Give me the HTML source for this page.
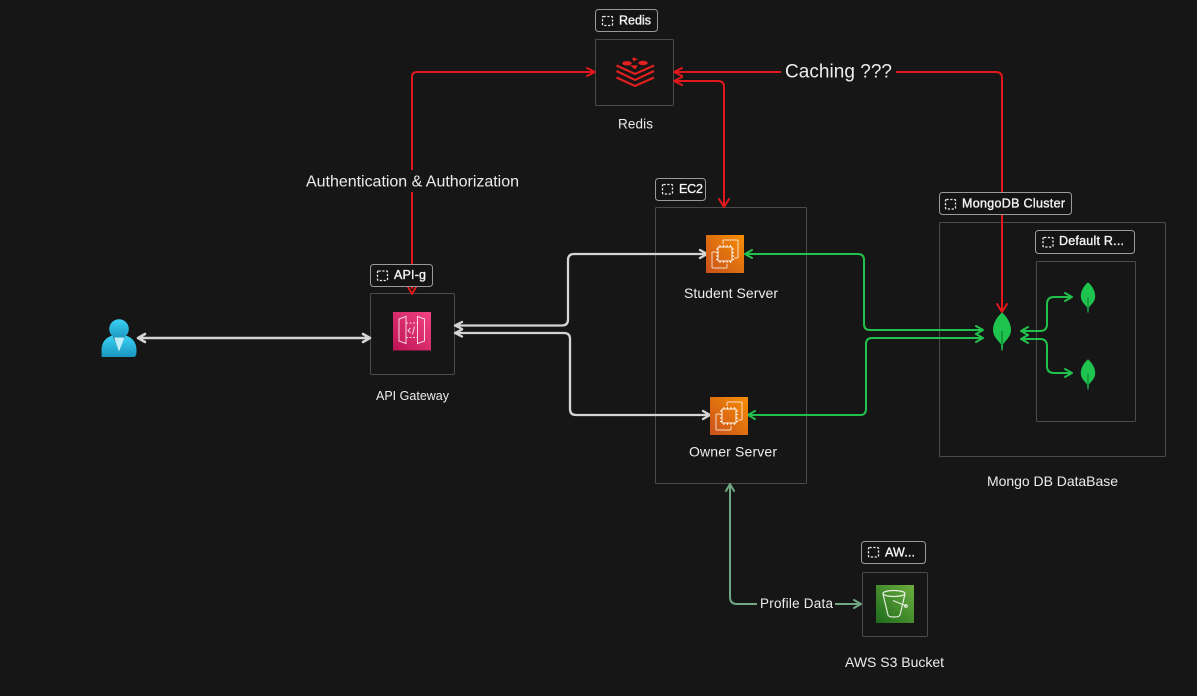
<!DOCTYPE html>
<html><head><meta charset="utf-8"><style>
html,body{margin:0;padding:0;background:#161616;width:1197px;height:696px;overflow:hidden}
svg{display:block;filter:blur(.3px)}
text{font-family:"Liberation Sans",sans-serif;fill:#ececec}
.box{fill:none;stroke:#4a4a4a;stroke-width:1}
.lab{fill:#141414;stroke:#9a9a9a;stroke-width:1}
.dash{fill:none;stroke:#eee;stroke-width:1.3;stroke-dasharray:2.2 1.6}
.lt{font-size:12.500px;font-weight:400;fill:#f4f4f4;stroke:#f4f4f4;stroke-width:.35}
.l{fill:none;stroke-width:2;stroke-linejoin:round;stroke-linecap:round}
.w{stroke:#d4d4d4}.r{stroke:#e0181c}.g{stroke:#22c04c}.p{stroke:#6fa883}
.ic{fill:none;stroke:#fff;stroke-width:1;opacity:.75}
</style></head><body>
<svg width="1197" height="696" viewBox="0 0 1197 696" xmlns="http://www.w3.org/2000/svg">
<defs>
<linearGradient id="pk" x1="1" y1="0" x2="0" y2="1"><stop offset="0" stop-color="#f34482"/><stop offset="1" stop-color="#bc1356"/></linearGradient>
<linearGradient id="or" x1="1" y1="0" x2="0" y2="1"><stop offset="0" stop-color="#f78e04"/><stop offset="1" stop-color="#c8511b"/></linearGradient>
<linearGradient id="gr" x1="1" y1="0" x2="0" y2="1"><stop offset="0" stop-color="#6cae3e"/><stop offset="1" stop-color="#1e6b1c"/></linearGradient>
<linearGradient id="us" x1="0" y1="0" x2="0" y2="1"><stop offset="0" stop-color="#3dd2f5"/><stop offset="1" stop-color="#1896c0"/></linearGradient>
<g id="ec2">
<path class="ic" d="M17 9V6a1 1 0 0 1 1-1H31a1 1 0 0 1 1 1V22a1 1 0 0 1-1 1H28"/>
<path class="ic" d="M21 29V32a1 1 0 0 1-1 1H7a1 1 0 0 1-1-1V18a1 1 0 0 1 1-1H10"/>
<rect class="ic" x="12" y="12" width="14" height="14" rx=".5" style="opacity:.95"/>
<path class="ic" d="M10 14h2M10 17.500h2M10 21h2M10 24.500h2M26 14h2M26 17.500h2M26 21h2M26 24.500h2M14 10v2M17.500 10v2M21 10v2M24.500 10v2M14 26v2M17.500 26v2M21 26v2M24.500 26v2" style="opacity:.95"/>
</g>
<path id="leaf" d="M0-18.500C5-14 9-8 9-1 9 6 3 10 1 13.500L.6 19.500H-.6L-1 13.500C-3 10-9 6-9-1-9-8-5-14 0-18.500Z" fill="#1fc44f"/>
</defs>

<rect width="1197" height="696" fill="#161616"/>

<!-- boxes -->
<rect class="box" x="595.500" y="39.500" width="78" height="66" rx="1"/>
<rect class="box" x="370.500" y="293.500" width="84" height="81" rx="1.500"/>
<rect class="box" x="655.500" y="207.500" width="151" height="276" rx="1"/>
<rect class="box" x="939.500" y="222.500" width="226" height="234" rx="1"/>
<rect class="box" x="1036.500" y="261.500" width="99" height="160" rx="1"/>
<rect class="box" x="862.500" y="572.500" width="65" height="64" rx="1.500"/>

<!-- red lines -->
<path class="l r" d="M412 288V77q0-5 5-5L595 72M587 68l8 4-8 4"/>
<path class="l r" d="M408 287l4 7 4-7"/>
<path class="l r" d="M674 72H996q6 0 6 6V312M682 68l-8 4 8 4M997 304l5 8 5-8"/>
<path class="l r" d="M674 81H718q6 0 6 6V207M682 77l-8 4 8 4M719 199l5 8 5-8"/>

<!-- white lines -->
<path class="l w" style="stroke-width:2.600" d="M138 338H370M145 334l-7 4 7 4M363 334l7 4-7 4"/>
<path class="l w" style="stroke-width:2.300" d="M455 325.500H562q6 0 6-6V260q0-6 6-6H707M462 322l-7 3.500 7 3.500M700 250l7 4-7 4"/>
<path class="l w" style="stroke-width:2.300" d="M455 333H564q6 0 6 6V409q0 6 6 6H710M462 329.500l-7 3.500 7 3.500M703 411l7 4-7 4"/>

<!-- green lines -->
<path class="l g" d="M745 254H858q6 0 6 6V324q0 6 6 6H983M752 250l-7 4 7 4M976 326l7 4-7 4"/>
<path class="l g" d="M748 415H860q6 0 6-6V344q0-6 6-6H983M755 411l-7 4 7 4M976 334l7 4-7 4"/>
<path class="l g" d="M1021 331H1040q7 0 7-7V304q0-7 7-7H1072M1028 327l-7 4 7 4M1065 293l7 4-7 4"/>
<path class="l g" d="M1021 339H1040q7 0 7 7V366q0 7 7 7H1072M1028 335l-7 4 7 4M1065 369l7 4-7 4"/>

<!-- profile line -->
<path class="l p" d="M730 484V597q0 7 7 7H861M726 491l4-7 4 7M854 600l7 4-7 4"/>

<!-- edge labels -->
<rect x="304" y="170" width="218" height="22" fill="#161616"/>
<text x="306" y="186.500" font-size="16" textLength="213" lengthAdjust="spacing">Authentication &amp; Authorization</text>
<rect x="781" y="60" width="115" height="22" fill="#161616"/>
<text x="785" y="77.500" font-size="19" textLength="107" lengthAdjust="spacing">Caching ???</text>
<rect x="757" y="594" width="78" height="20" fill="#161616"/>
<text x="760" y="608" font-size="13.500" textLength="73" lengthAdjust="spacing">Profile Data</text>

<!-- group labels -->
<rect class="lab" x="595.500" y="9.500" width="62" height="22" rx="3"/>
<rect class="dash" x="602.500" y="16.500" width="10" height="9" rx="1"/>
<text class="lt" x="619" y="24.500" textLength="32" lengthAdjust="spacing">Redis</text>

<rect class="lab" x="370.500" y="264.500" width="62" height="22" rx="3"/>
<rect class="dash" x="377.500" y="271" width="10" height="9.500" rx="1"/>
<text class="lt" x="394" y="279" textLength="32" lengthAdjust="spacing">API-g</text>

<rect class="lab" x="655.500" y="178.500" width="50" height="22" rx="3"/>
<rect class="dash" x="662.500" y="184.500" width="10" height="9.500" rx="1"/>
<text class="lt" x="679" y="193" textLength="24" lengthAdjust="spacing">EC2</text>

<rect class="lab" x="939.500" y="192.500" width="132" height="22" rx="3"/>
<rect class="dash" x="945.500" y="199.500" width="10" height="9.500" rx="1"/>
<text class="lt" x="962" y="207.500" textLength="103" lengthAdjust="spacing">MongoDB Cluster</text>

<rect class="lab" x="1035.500" y="230.500" width="99" height="23" rx="3"/>
<rect class="dash" x="1043" y="237.500" width="10" height="9.500" rx="1"/>
<text class="lt" x="1059" y="245" textLength="65" lengthAdjust="spacing">Default R...</text>

<rect class="lab" x="861.500" y="541.500" width="64" height="22" rx="3"/>
<rect class="dash" x="868.500" y="547.500" width="10" height="9.500" rx="1"/>
<text class="lt" x="885" y="556.500" textLength="30" lengthAdjust="spacing">AW...</text>

<!-- node labels -->
<text x="618" y="128.500" font-size="13.500" textLength="35" lengthAdjust="spacing">Redis</text>
<text x="376" y="400" font-size="12.500" textLength="73" lengthAdjust="spacing">API Gateway</text>
<text x="684" y="298" font-size="14" textLength="94" lengthAdjust="spacing">Student Server</text>
<text x="689" y="456.500" font-size="14" textLength="88" lengthAdjust="spacing">Owner Server</text>
<text x="987" y="486" font-size="14" textLength="131" lengthAdjust="spacing">Mongo DB DataBase</text>
<text x="845" y="667" font-size="14" textLength="99" lengthAdjust="spacing">AWS S3 Bucket</text>

<!-- user -->
<circle cx="119" cy="329" r="9.800" fill="url(#us)"/>
<path d="M102 355c-.5-1-.500-3-.500-5 0-7.500 4-12.500 11-14.500l6.500 14 6.500-14c7 2 11 7 11 14.500 0 2 0 4-.5 5-.3 1-1 2-2 2h-31c-1 0-1.700-1-2-2Z" fill="url(#us)"/>
<path d="M114 337.500h10.500l-5.500 14Z" fill="#bfeef8"/>

<!-- api gateway icon -->
<rect x="393" y="312" width="38" height="38.500" fill="url(#pk)"/>
<g fill="none" stroke="#fff" stroke-width="1" opacity=".8">
<path d="M399 319l7-2.500v27l-7-2.500Z"/>
<path d="M424.500 319l-7-2.500v27l7-2.500Z"/>
<path d="M406 323h11.500M406 337.500h11.500" stroke-dasharray="2 1.500"/>
<path d="M410.500 328l-2.500 2.500 2.500 2.500M414.500 326.500l-2 8"/>
</g>

<!-- ec2 icons -->
<rect x="706" y="235" width="38" height="38" fill="url(#or)"/>
<use href="#ec2" x="706" y="235"/>
<rect x="710" y="397" width="38" height="38" fill="url(#or)"/>
<use href="#ec2" x="710" y="397"/>

<!-- s3 icon -->
<rect x="876" y="585" width="38" height="38" fill="url(#gr)"/>
<g fill="none" stroke="#fff" stroke-width="1.200" opacity=".85">
<ellipse cx="894" cy="593.500" rx="11" ry="3"/>
<path d="M883 594l5 21c.4 1.500 2.500 2 6 2s5.600-.5 6-2l5-21"/>
<path d="M893 600.500l13 5.500"/>
<circle cx="906" cy="606" r="1.300"/>
</g>

<!-- redis icon -->
<g fill="none" stroke="#e3201f" stroke-width="2.100" stroke-linejoin="miter">
<path d="M616.500 65.500l18.500 8.500 19-8.500"/>
<path d="M616.500 71l18.500 9 19-9"/>
<path d="M616.500 77.500l18.500 8.500 19-8.500"/>
</g>
<g fill="#e3201f">
<ellipse cx="627" cy="63.300" rx="4.800" ry="2.200"/>
<ellipse cx="643" cy="63" rx="4.800" ry="2.200"/>
<path d="M630 65.500l8-.3-3 4.300ZM632 59l2.500-2 1 1.500 3 1-3 .6-1.500 1.500-1-1.500Z"/>
</g>

<!-- mongo leaves -->
<use href="#leaf" x="1002" y="331"/>
<path d="M1002 331v14" stroke="#0f7a32" stroke-width="1.200"/>
<use href="#leaf" transform="translate(1088 297) scale(.8)"/>
<path d="M1088 297v11" stroke="#0f7a32" stroke-width="1"/>
<use href="#leaf" transform="translate(1088 374) scale(.8)"/>
<path d="M1088 374v11" stroke="#0f7a32" stroke-width="1"/>
</svg>
</body></html>
